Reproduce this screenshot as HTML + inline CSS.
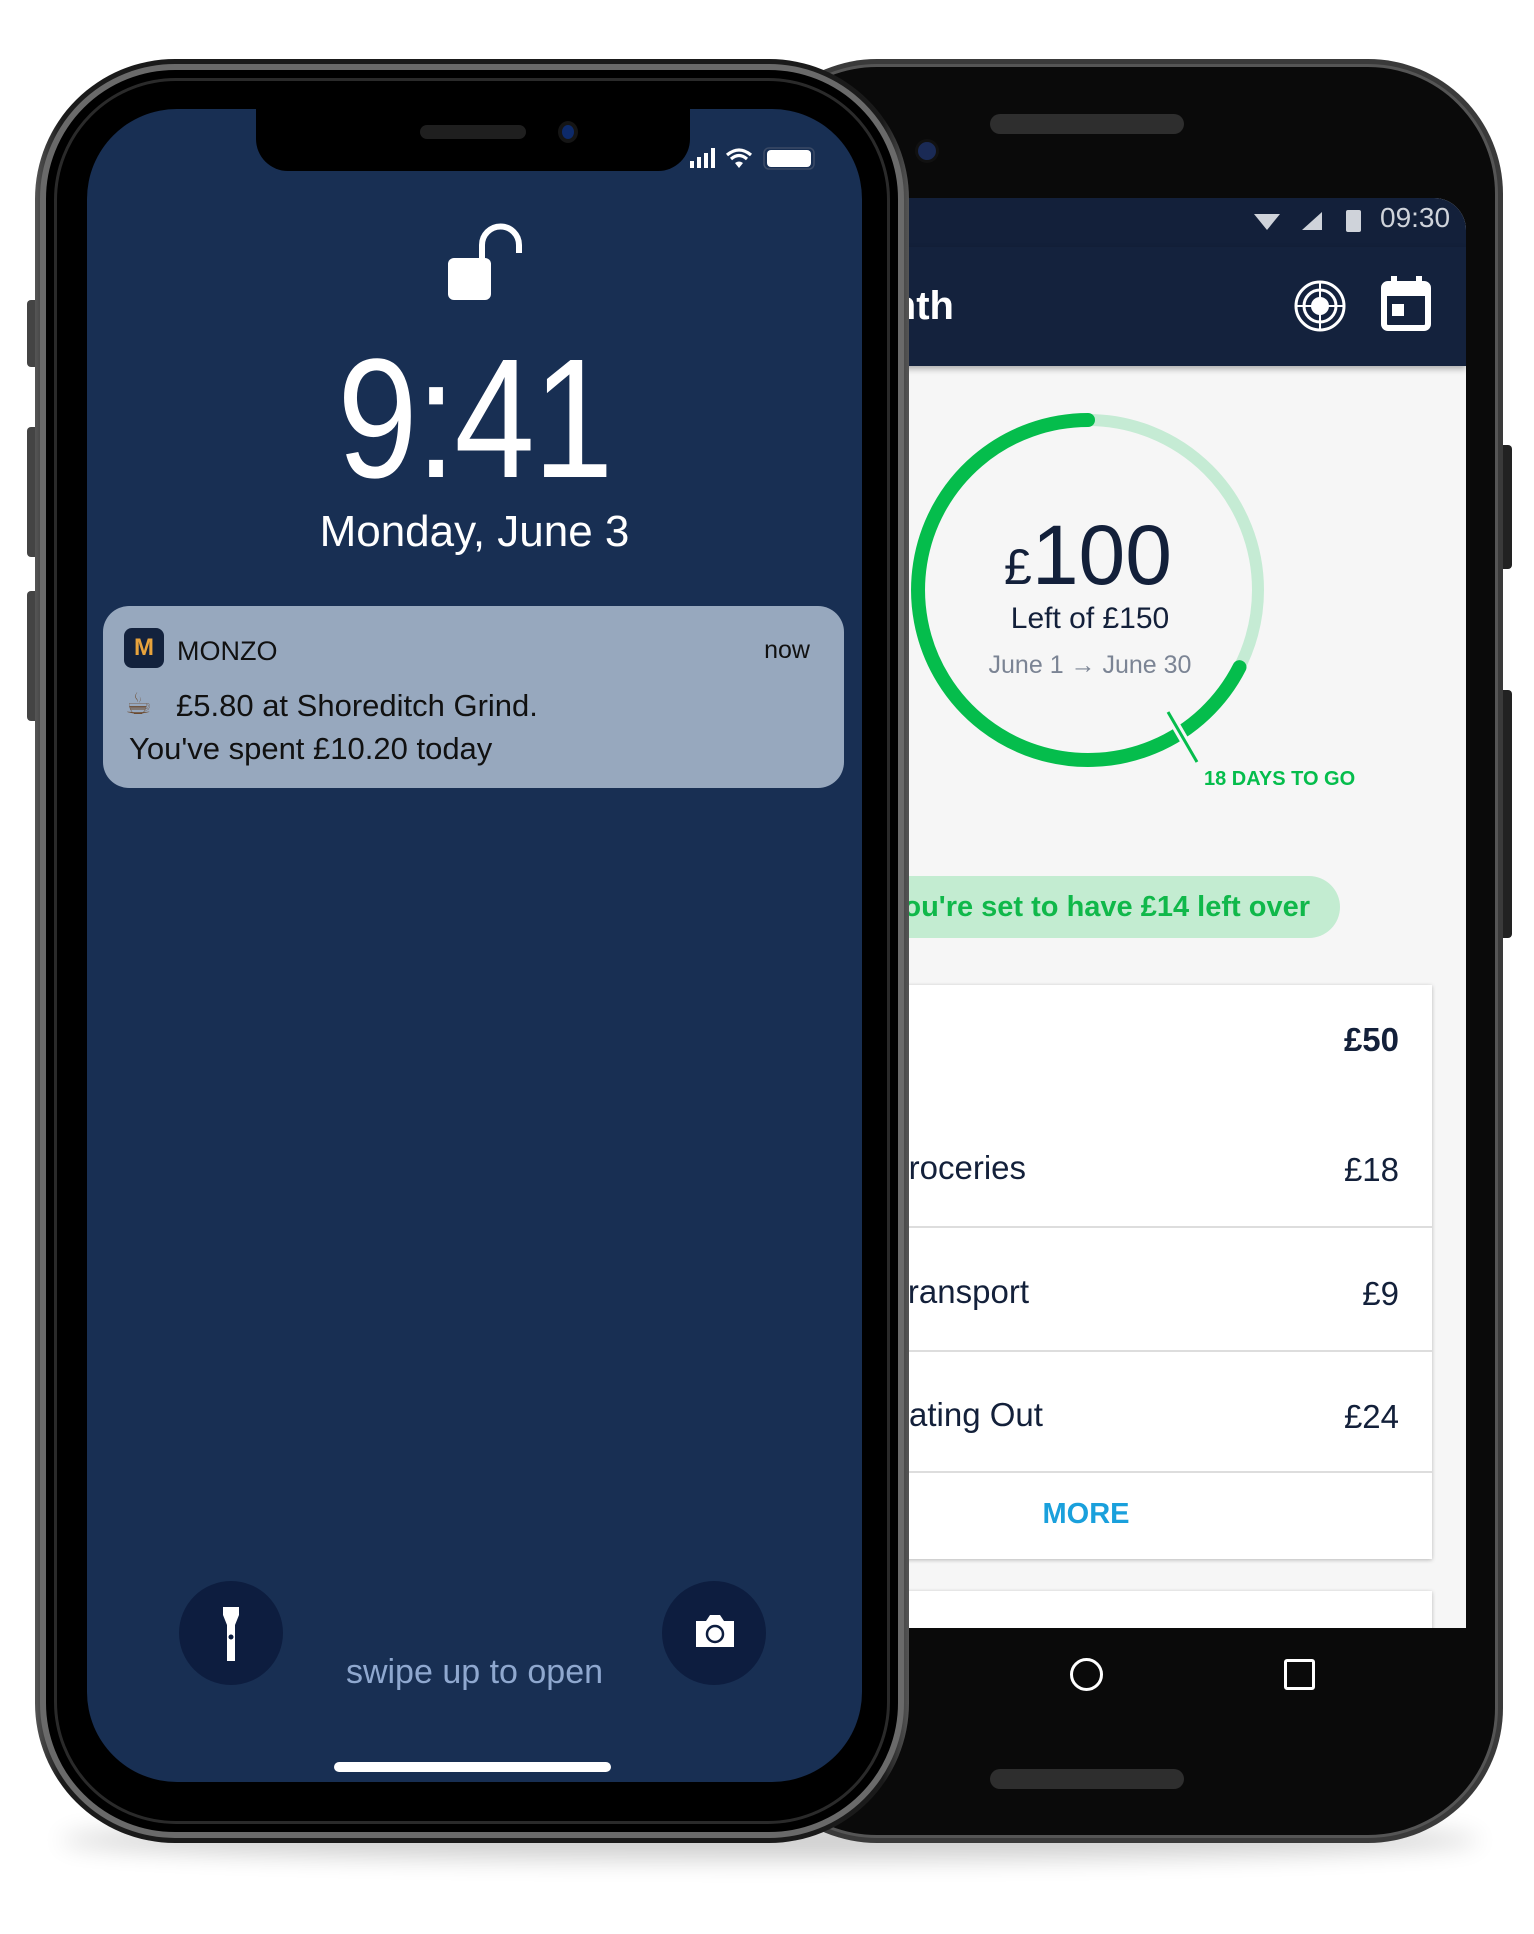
<!DOCTYPE html>
<html><head><meta charset="utf-8"><style>
*{margin:0;padding:0;box-sizing:border-box}
body{width:1534px;height:1934px;background:#fff;position:relative;overflow:hidden;font-family:"Liberation Sans",sans-serif}
.a{position:absolute}
</style></head><body>

<!-- shadow -->
<div class="a" style="left:60px;top:1820px;width:1420px;height:40px;border-radius:50%;background:#000;opacity:.18;filter:blur(12px)"></div>

<!-- ANDROID -->
<div class="a" style="left:1500px;top:445px;width:12px;height:124px;background:#222;border-radius:0 4px 4px 0"></div>
<div class="a" style="left:1500px;top:690px;width:12px;height:248px;background:#222;border-radius:0 4px 4px 0"></div>
<div class="a" style="left:742px;top:59px;width:761px;height:1784px;border-radius:135px;background:#3a3a3a;padding:5px">
 <div style="width:100%;height:100%;border-radius:130px;background:#0a0a0a;border:3px solid #555"></div>
</div>
<div class="a" style="left:990px;top:114px;width:194px;height:20px;border-radius:10px;background:#2e2e2e"></div>
<div class="a" style="left:990px;top:1769px;width:194px;height:20px;border-radius:10px;background:#2e2e2e"></div>
<div class="a" style="left:915px;top:139px;width:24px;height:24px;border-radius:50%;background:#1a2a55;border:3px solid #111"></div>

<!-- android screen -->
<div class="a" style="left:860px;top:198px;width:606px;height:1430px;border-radius:0 32px 0 0;overflow:hidden;background:#f6f6f6">
 <div class="a" style="left:0;top:0;width:606px;height:49px;background:#13203a"></div>
 <div class="a" style="left:0;top:49px;width:606px;height:119px;background:#14223d;box-shadow:0 3px 6px rgba(0,0,0,.3)"></div>
 <div class="a" style="left:520px;top:4px;font-size:28px;color:#cfd3da">09:30</div>
 <svg class="a" style="left:392px;top:10px" width="112" height="30">
  <path d="M2 6 L28 6 L15 22 Z" fill="#cfd3da"/>
  <path d="M50 22 L70 22 L70 4 Z" fill="#cfd3da"/>
  <rect x="94" y="2" width="15" height="22" rx="2" fill="#cfd3da"/>
 </svg>
 <div class="a" style="left:-26px;top:86px;font-size:40px;font-weight:bold;color:#fff">Month</div>
 <svg class="a" style="left:432px;top:80px" width="60" height="56">
  <g fill="none" stroke="#fff" stroke-width="3"><circle cx="28" cy="28" r="24"/><circle cx="28" cy="28" r="16"/></g>
  <circle cx="28" cy="28" r="9" fill="#fff"/>
  <path d="M4 28H52M28 4V52" stroke="#fff" stroke-width="2"/>
 </svg>
 <svg class="a" style="left:520px;top:76px" width="52" height="60">
  <rect x="4" y="10" width="44" height="44" rx="4" fill="none" stroke="#fff" stroke-width="6"/>
  <rect x="4" y="10" width="44" height="12" fill="#fff"/>
  <rect x="11" y="2" width="6" height="10" fill="#fff"/><rect x="36" y="2" width="6" height="10" fill="#fff"/>
  <rect x="12" y="30" width="12" height="12" fill="#fff"/>
 </svg>
 <!-- ring -->
 <svg class="a" style="left:0;top:168px" width="606" height="460">
  <g transform="translate(228,224)">
   <circle r="170" fill="none" stroke="#c5ebd4" stroke-width="12"/>
   <path d="M0 -170 A170 170 0 1 0 151.5 77.2" fill="none" stroke="#05bd4c" stroke-width="14" stroke-linecap="round"/>
   <path d="M80 122 L109 172" stroke="#f6f6f6" stroke-width="9"/>
   <path d="M80 122 L109 172" stroke="#05bd4c" stroke-width="3"/>
  </g>
  <text x="228" y="218" text-anchor="middle" fill="#13203a"><tspan font-size="50">£</tspan><tspan font-size="84">100</tspan></text>
  <text x="230" y="262" text-anchor="middle" font-size="30" fill="#13203a">Left of £150</text>
  <text x="230" y="307" text-anchor="middle" font-size="25" fill="#7b8494">June 1 → June 30</text>
  <text x="344" y="419" font-size="20" font-weight="bold" fill="#05bd4c">18 DAYS TO GO</text>
 </svg>
 <div class="a" style="left:-100px;top:678px;width:580px;height:62px;border-radius:31px;background:#c3ecd1;color:#10b84a;font-size:29px;font-weight:bold;line-height:62px;text-align:right;padding-right:30px">You're set to have £14 left over</div>
 <!-- card -->
 <div class="a" style="left:0;top:787px;width:572px;height:574px;background:#fff;box-shadow:0 1px 4px rgba(0,0,0,.25)">
  <div class="a" style="right:33px;top:36px;font-size:33px;font-weight:bold;color:#13203a">£50</div>
  <div class="a" style="left:23px;top:164px;font-size:33px;color:#13203a">Groceries</div>
  <div class="a" style="right:33px;top:166px;font-size:33px;color:#13203a">£18</div>
  <div class="a" style="left:0;top:241px;width:572px;height:2px;background:#ddd"></div>
  <div class="a" style="left:29px;top:288px;font-size:33px;color:#13203a">Transport</div>
  <div class="a" style="right:33px;top:290px;font-size:33px;color:#13203a">£9</div>
  <div class="a" style="left:0;top:365px;width:572px;height:2px;background:#ddd"></div>
  <div class="a" style="left:27px;top:411px;font-size:33px;color:#13203a">Eating Out</div>
  <div class="a" style="right:33px;top:413px;font-size:33px;color:#13203a">£24</div>
  <div class="a" style="left:0;top:486px;width:572px;height:2px;background:#ddd"></div>
  <div class="a" style="left:0;width:572px;text-align:center;top:513px;font-size:29px;font-weight:bold;color:#1aa0dc;padding-right:120px">MORE</div>
 </div>
 <div class="a" style="left:0;top:1393px;width:572px;height:60px;background:#fff;box-shadow:0 1px 4px rgba(0,0,0,.25)"></div>
</div>
<!-- android nav -->
<div class="a" style="left:1070px;top:1658px;width:33px;height:33px;border-radius:50%;border:3.5px solid #fff"></div>
<div class="a" style="left:1284px;top:1659px;width:31px;height:31px;border-radius:3px;border:3.5px solid #fff"></div>

<!-- IPHONE -->
<div class="a" style="left:27px;top:300px;width:10px;height:67px;background:#444;border-radius:4px 0 0 4px"></div>
<div class="a" style="left:27px;top:427px;width:10px;height:130px;background:#444;border-radius:4px 0 0 4px"></div>
<div class="a" style="left:27px;top:591px;width:10px;height:130px;background:#444;border-radius:4px 0 0 4px"></div>
<div class="a" style="left:35px;top:59px;width:874px;height:1784px;border-radius:140px;background:linear-gradient(90deg,#555,#1a1a1a 3%,#1a1a1a 97%,#555);padding:5px">
 <div style="width:100%;height:100%;border-radius:135px;background:#000;border:6px solid #6a6a6a;padding:8px">
  <div style="width:100%;height:100%;border-radius:122px;background:#000;border:3px solid #2a2a2a"></div>
 </div>
</div>
<div class="a" style="left:87px;top:109px;width:775px;height:1673px;border-radius:90px;background:#182f53;overflow:hidden">
 <div class="a" style="left:169px;top:-2px;width:434px;height:64px;background:#000;border-radius:0 0 32px 32px"></div>
 <div class="a" style="left:333px;top:16px;width:106px;height:14px;border-radius:7px;background:#1f1f1f"></div>
 <div class="a" style="left:471px;top:12px;width:20px;height:22px;border-radius:50%;background:#0d2a6a;border:4px solid #151515"></div>
 <svg class="a" style="left:600px;top:35px" width="150" height="30">
  <rect x="3" y="17" width="4" height="7" fill="#fff"/><rect x="10" y="13" width="4" height="11" fill="#fff"/>
  <rect x="17" y="9" width="4" height="15" fill="#fff"/><rect x="24" y="4" width="4" height="20" fill="#fff"/>
  <path d="M40 11 Q52 1 64 11 M44 15 Q52 8 60 15" fill="none" stroke="#fff" stroke-width="3.2"/>
  <path d="M48 19 L52 24 L56 19 Q52 16 48 19Z" fill="#fff"/>
  <rect x="80" y="6" width="44" height="17" rx="4" fill="#fff"/>
  <rect x="77" y="4" width="50" height="21" rx="5" fill="none" stroke="#3a4a66" stroke-width="1.5"/>
 </svg>
 <!-- lock -->
 <svg class="a" style="left:360px;top:112px" width="85" height="85">
  <rect x="1" y="37" width="43" height="42" rx="6" fill="#fff"/>
  <path d="M35 42 V24 A18.5 18.5 0 0 1 72 24 V32" fill="none" stroke="#fff" stroke-width="6"/>
 </svg>
 <div class="a" style="left:0;width:775px;text-align:center;top:225px;font-size:170px;color:#fff;line-height:1;transform:scaleX(.85);letter-spacing:-2px">9:41</div>
 <div class="a" style="left:0;width:775px;text-align:center;top:398px;font-size:44px;color:#fff">Monday, June 3</div>
 <!-- notification -->
 <div class="a" style="left:16px;top:497px;width:741px;height:182px;border-radius:26px;background:#97a8be">
  <div class="a" style="left:21px;top:22px;width:40px;height:40px;border-radius:8px;background:#13223d;color:#fff;font-weight:bold;font-size:24px;text-align:center;line-height:40px"><span style="color:#e8a33c">M</span></div>
  <div class="a" style="left:74px;top:30px;font-size:27px;color:#111">MONZO</div>
  <div class="a" style="right:34px;top:30px;font-size:25px;color:#111">now</div>
  <div class="a" style="left:22px;top:81px;font-size:30px;color:#111;font-family:'DejaVu Sans',sans-serif;color:#6b4a2f">☕</div>
  <div class="a" style="left:73px;top:82px;font-size:31px;color:#111">£5.80 at Shoreditch Grind.</div>
  <div class="a" style="left:26px;top:125px;font-size:31px;color:#111">You've spent £10.20 today</div>
 </div>
 <!-- bottom -->
 <div class="a" style="left:92px;top:1472px;width:104px;height:104px;border-radius:50%;background:#0d1d3f"></div>
 <svg class="a" style="left:92px;top:1472px" width="104" height="104">
  <path d="M44 26 H60 V34 L56 44 V80 H48 V44 L44 34Z" fill="#fff"/>
  <circle cx="52" cy="56" r="2.5" fill="#0d1d3f"/>
 </svg>
 <div class="a" style="left:575px;top:1472px;width:104px;height:104px;border-radius:50%;background:#0d1d3f"></div>
 <svg class="a" style="left:575px;top:1472px" width="104" height="104">
  <path d="M34 40 H44 L48 34 H58 L62 40 H72 V66 H34Z" fill="#fff"/>
  <circle cx="53" cy="53" r="8" fill="none" stroke="#0d1d3f" stroke-width="2.5"/>
 </svg>
 <div class="a" style="left:0;width:775px;text-align:center;top:1544px;font-size:34px;color:#8fa8cf">swipe up to open</div>
 <div class="a" style="left:247px;top:1653px;width:277px;height:10px;border-radius:5px;background:#fff"></div>
</div>
</body></html>
